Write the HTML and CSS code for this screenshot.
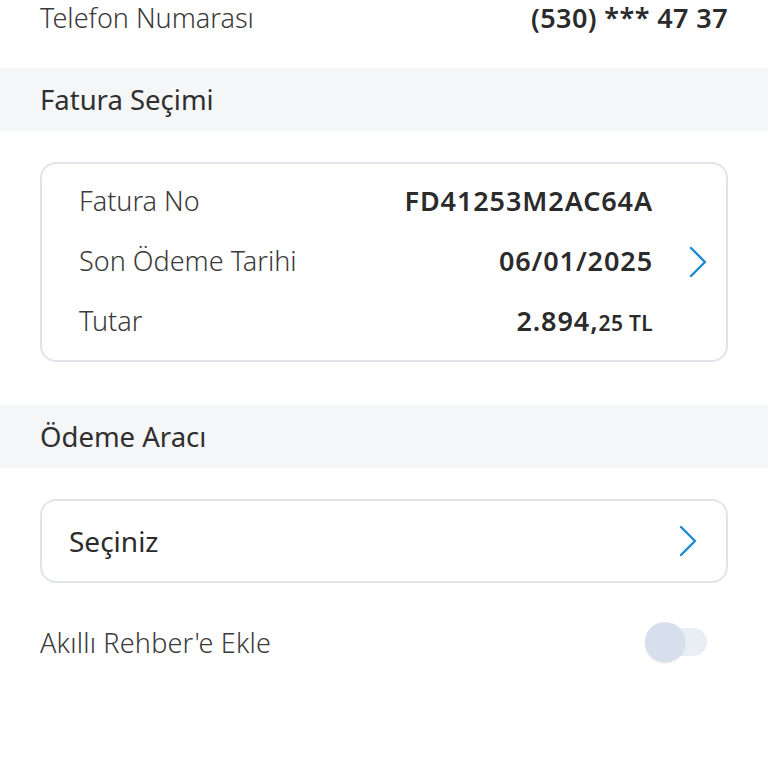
FILE: index.html
```html
<!DOCTYPE html>
<html lang="tr">
<head>
<meta charset="utf-8">
<link rel="stylesheet" href="styles.css">
</head>
<body>
<div class="page">
  <div class="phone-row">
    <span class="label">Telefon Numarası</span>
    <span class="value">(530) *** 47 37</span>
  </div>

  <div class="band"><span>Fatura Seçimi</span></div>

  <div class="card invoice">
    <div class="rows">
      <div class="row"><span class="rlabel">Fatura No</span><span class="rvalue">FD41253M2AC64A</span></div>
      <div class="row"><span class="rlabel">Son Ödeme Tarihi</span><span class="rvalue">06/01/2025</span></div>
      <div class="row"><span class="rlabel">Tutar</span><span class="rvalue">2.894,<small class="dec">25 TL</small></span></div>
    </div>
    <svg class="chev" width="20" height="32" viewBox="0 0 20 32"><path d="M3 2 L17 16 L3 30" fill="none" stroke="#1a8ad4" stroke-width="2.4" stroke-linecap="round" stroke-linejoin="round"/></svg>
  </div>

  <div class="band band2"><span>Ödeme Aracı</span></div>

  <div class="card select">
    <span class="sel">Seçiniz</span>
    <svg class="chev2" width="20" height="32" viewBox="0 0 20 32"><path d="M3 2 L17 16 L3 30" fill="none" stroke="#1a8ad4" stroke-width="2.4" stroke-linecap="round" stroke-linejoin="round"/></svg>
  </div>

  <div class="toggle-row">
    <span class="label">Akıllı Rehber'e Ekle</span>
    <span class="toggle"><span class="knob"></span></span>
  </div>
</div>
</body>
</html>
```

FILE: styles.css
```css
* { box-sizing: border-box; }
html, body { margin: 0; padding: 0; background: #fff; }
body {
  font-family: "Noto Sans", "Open Sans", sans-serif;
  color: #333;
  width: 768px;
  height: 768px;
  overflow: hidden;
}
.page { display: flex; flex-direction: column; }

.phone-row {
  height: 68px;
  padding: 0 40px;
  display: flex;
  justify-content: space-between;
  align-items: flex-start;
  font-size: 27px;
  line-height: 36px;
}
.phone-row .label { font-weight: 300; color: #3a3a3a; }
.phone-row .value { font-weight: 600; color: #2b2b2b; letter-spacing: 0.4px; }

.band {
  background: #f5f6f8;
  height: 63px;
  padding: 0 40px;
  display: flex;
  align-items: center;
  font-size: 27.5px;
  color: #2f2f2f;
}

.card {
  margin: 31px 40px 0;
  border: 2px solid #e1e4ea;
  border-radius: 16px;
  background: #fff;
}
.invoice {
  height: 200px;
  display: flex;
  align-items: center;
  padding: 0 18px 3px 37px;
}
.rows { flex: 1; display: flex; flex-direction: column; padding-right: 35px; }
.row {
  height: 60px;
  display: flex;
  justify-content: space-between;
  align-items: center;
  font-size: 27px;
}
.rlabel { font-weight: 300; color: #3a3a3a; }
.rvalue { font-weight: 600; color: #2b2b2b; letter-spacing: 0.9px; }
.dec { font-size: 21px; letter-spacing: 0.3px; }
.chev { flex: none; margin-top: 3px; }

.band2 { margin-top: 43px; }

.select {
  height: 84px;
  display: flex;
  align-items: center;
  justify-content: space-between;
  padding: 0 28px 0 27px;
  font-size: 28px;
}
.sel { color: #2b2b2b; }

.toggle-row {
  margin-top: 34px;
  padding: 0 40px;
  height: 50px;
  display: flex;
  align-items: center;
  justify-content: space-between;
  font-size: 27px;
}
.toggle-row .label { font-weight: 300; color: #3a3a3a; letter-spacing: 0.2px; }
.toggle {
  position: relative;
  width: 60px;
  height: 28px;
  margin-right: 21px;
  border-radius: 14px;
  background: #e9edf4;
}
.knob {
  position: absolute;
  left: -2px;
  top: -6px;
  width: 40px;
  height: 40px;
  border-radius: 50%;
  background: #d8dfec;
  box-shadow: 0 1px 2px rgba(0,0,0,0.12);
}
```
